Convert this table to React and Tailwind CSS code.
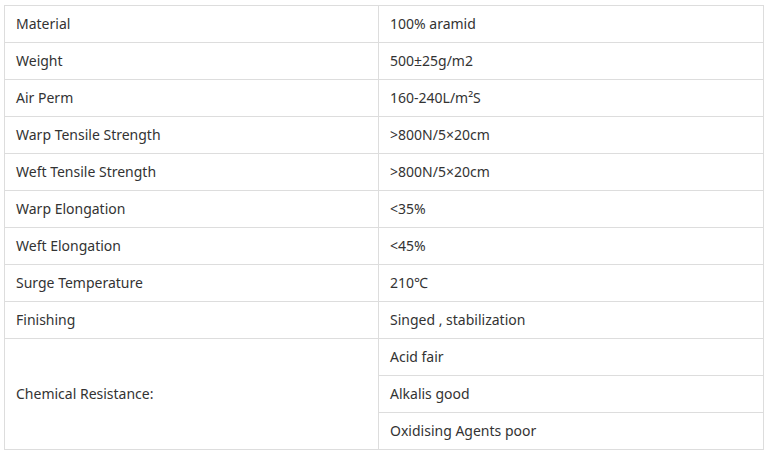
import React from "react";

const rows = [
  ["Material", "100% aramid"],
  ["Weight", "500±25g/m2"],
  ["Air Perm", "160-240L/m²S"],
  ["Warp Tensile Strength", ">800N/5×20cm"],
  ["Weft Tensile Strength", ">800N/5×20cm"],
  ["Warp Elongation", "<35%"],
  ["Weft Elongation", "<45%"],
  ["Surge Temperature", "210℃"],
  ["Finishing", "Singed , stabilization"],
];

const sub = ["Acid fair", "Alkalis good", "Oxidising Agents poor"];

export default function App() {
  return (
    <div className="w-[770px] h-[458px] bg-white pt-[5px] pl-[4px] text-[14px] text-[#333333]" style={{ fontFamily: '"Noto Sans", sans-serif' }}>
      <div className="w-[760px] border-l border-t border-[#dddddd]">
        {rows.map(([a, b]) => (
          <div key={a} className="flex">
            <div className="w-[374px] h-[37px] border-r border-b border-[#dddddd] pl-[11px] pb-[2px] flex items-center">{a}</div>
            <div className="w-[385px] h-[37px] border-r border-b border-[#dddddd] pl-[11px] pb-[2px] flex items-center">{b}</div>
          </div>
        ))}
        <div className="flex">
          <div className="w-[374px] h-[111px] border-r border-b border-[#dddddd] pl-[11px] pb-[2px] flex items-center">Chemical Resistance:</div>
          <div className="w-[385px] flex flex-col">
            {sub.map((s) => (
              <div key={s} className="h-[37px] border-r border-b border-[#dddddd] pl-[11px] pb-[2px] flex items-center">{s}</div>
            ))}
          </div>
        </div>
      </div>
    </div>
  );
}
